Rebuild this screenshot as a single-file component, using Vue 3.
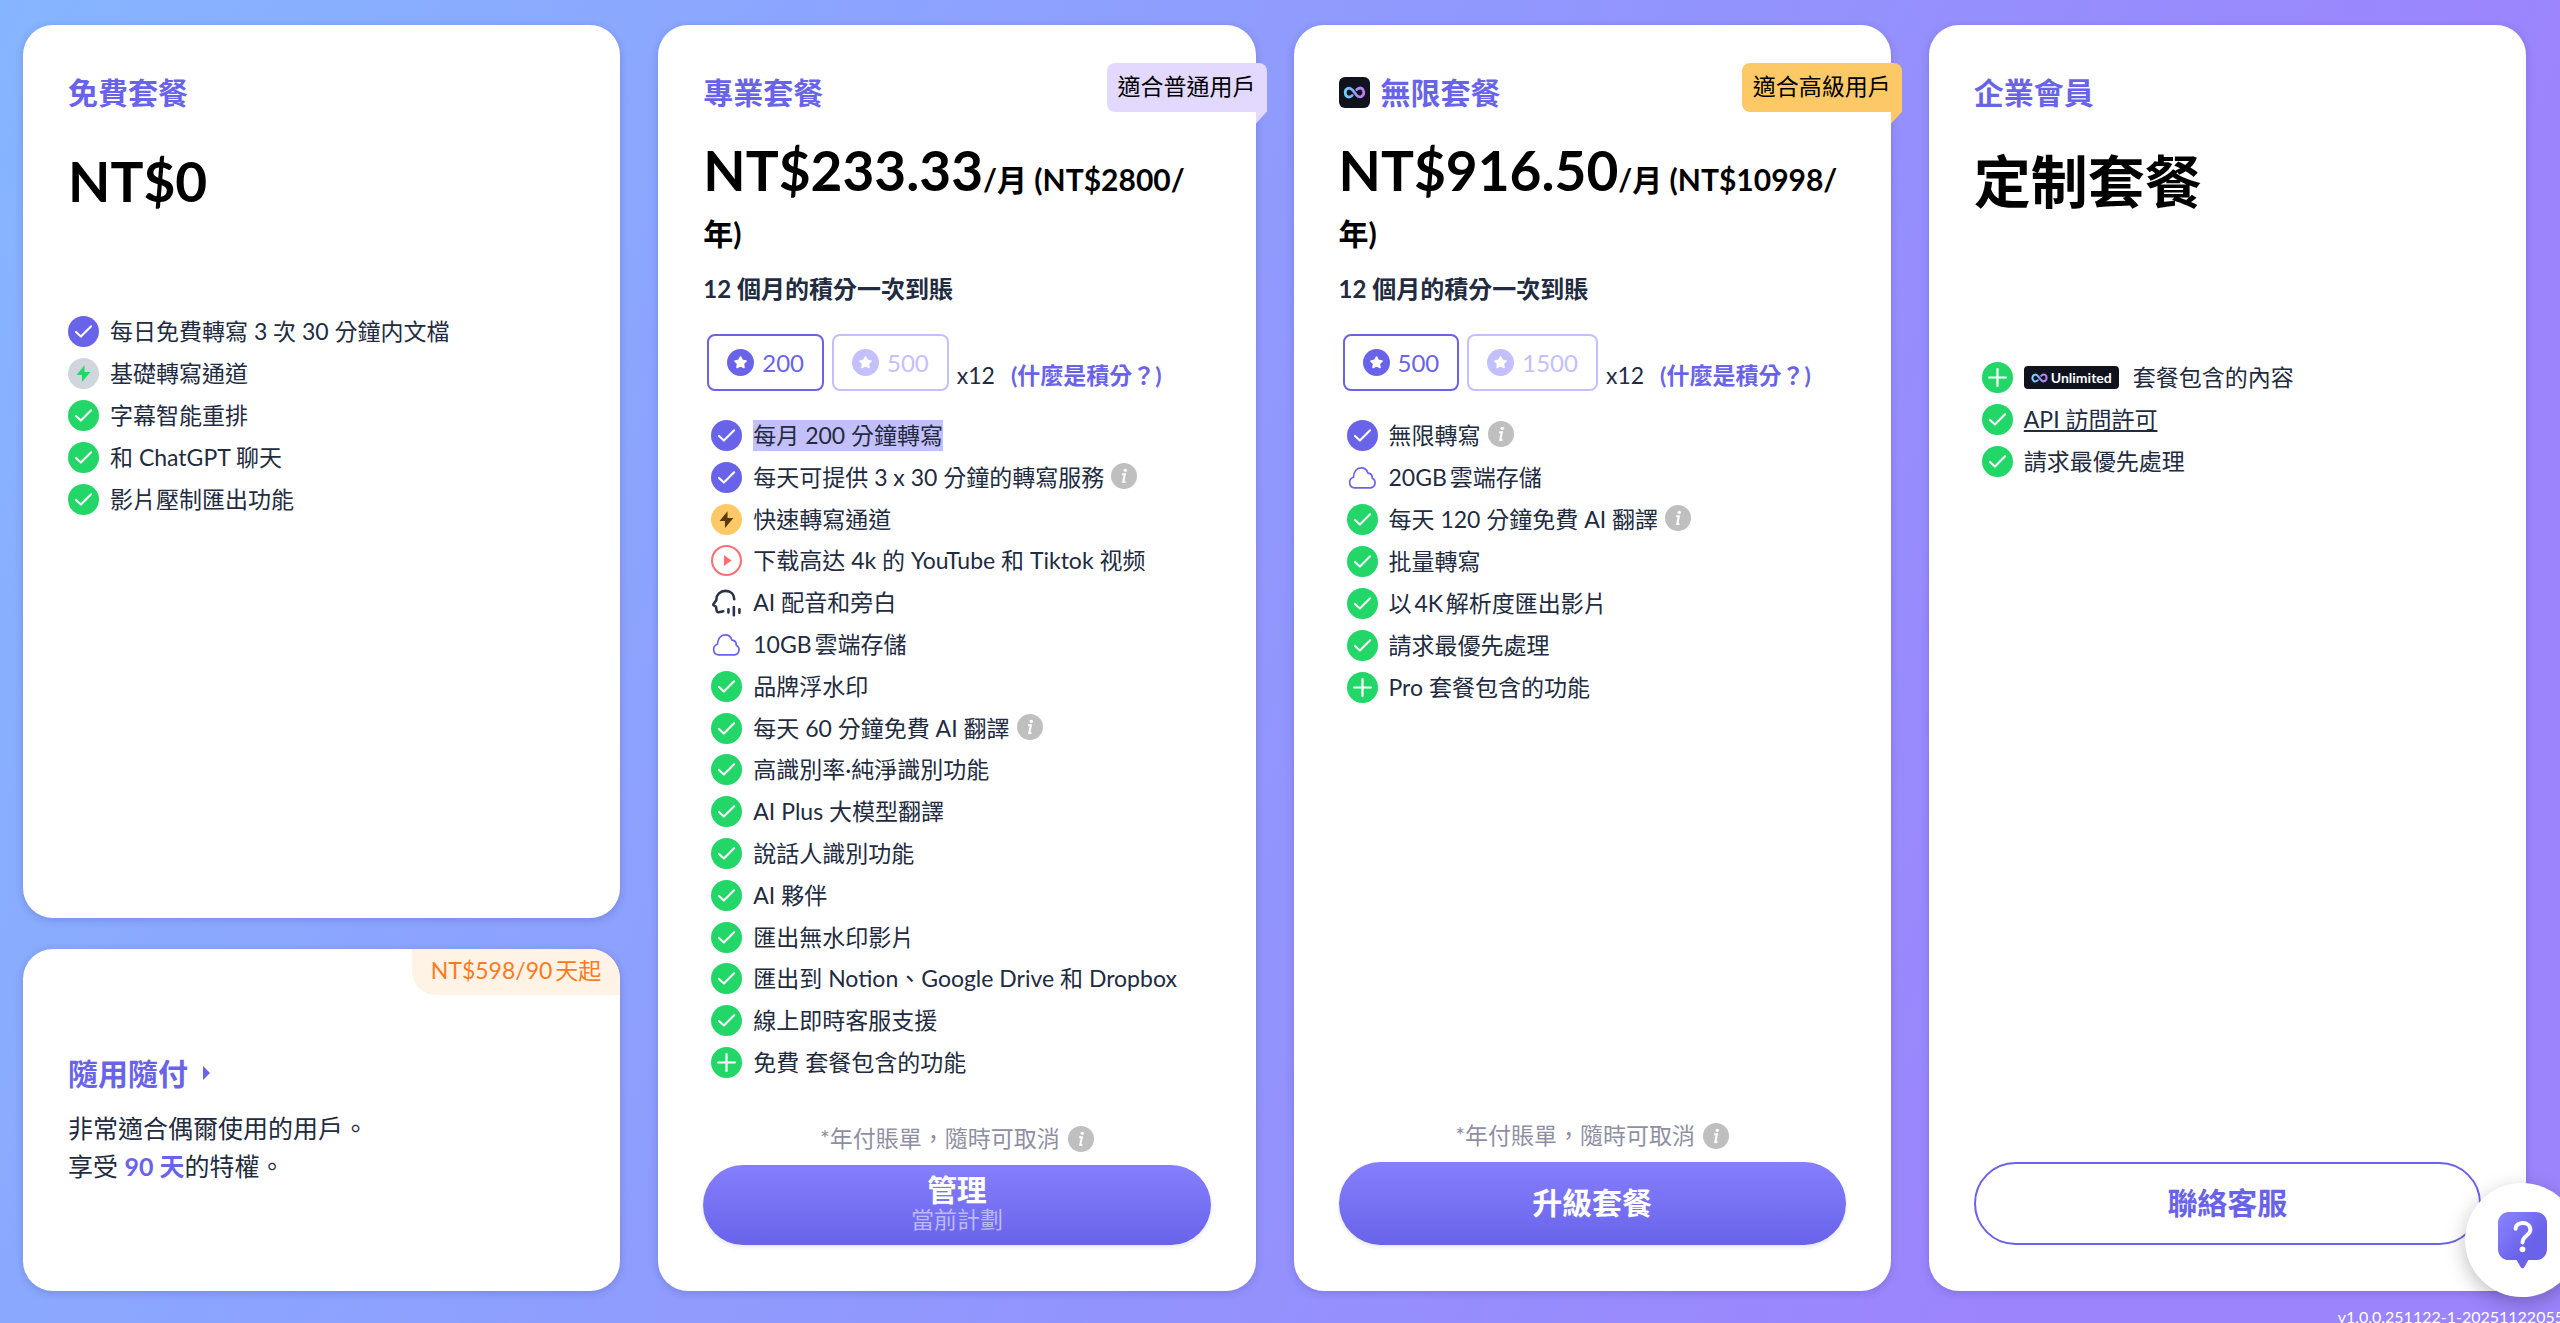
<template>
  <main class="pricing" lang="zh-Hant">
    <div class="column">
      <section class="card free">
        <h2 class="title">免費套餐</h2>
        <p class="price single"><strong>NT$0</strong></p>
        <ul class="features">
          <li v-for="item in freeFeatures" :key="item.text">
            <svg class="icon" viewBox="0 0 24 24"><use :href="'#i-' + item.icon" /></svg>
            <span>{{ item.text }}</span>
          </li>
        </ul>
      </section>
      <section class="card payg">
        <div class="corner">NT$598/90天起</div>
        <h2 class="title">
          <a href="#payg">隨用隨付</a>
          <svg class="arrow" viewBox="0 0 8 16"><path d="M0 0l8 8-8 8z" fill="currentColor" /></svg>
        </h2>
        <p class="desc">非常適合偶爾使用的用戶。<br />享受 <b>90 天</b>的特權。</p>
      </section>
    </div>

    <section v-for="plan in plans" :key="plan.key" class="card" :class="plan.key">
      <div class="ribbon">{{ plan.ribbon }}</div>
      <h2 class="title">
        <svg v-if="plan.key === 'unlimited'" class="badge" viewBox="0 0 31 31">
          <rect width="31" height="31" rx="6" fill="#10121e" />
          <use href="#i-infinity" x="4" y="9" width="23" height="13" />
        </svg>
        {{ plan.title }}
      </h2>
      <p class="price"><strong>{{ plan.price }}</strong>/月 ({{ plan.yearly }}/年)</p>
      <p class="once">12 個月的積分一次到賬</p>
      <div class="credits">
        <button
          v-for="num in plan.credits"
          :key="num"
          class="chip"
          :class="{ chipActive: picked[plan.key] === num }"
          @click="picked[plan.key] = num"
        >
          <svg viewBox="0 0 24 24"><use href="#i-star" /></svg>{{ num }}
        </button>
        <span class="times">x12</span>
        <a href="#credits">(什麼是積分？)</a>
      </div>
      <ul class="features">
        <li v-for="item in plan.features" :key="item.text">
          <svg class="icon" viewBox="0 0 24 24"><use :href="'#i-' + item.icon" /></svg>
          <span :class="{ marked: item.marked }">{{ item.text }}</span>
          <svg v-if="item.info" class="info" viewBox="0 0 24 24"><use href="#i-info" /></svg>
        </li>
      </ul>
      <p class="note">
        *年付賬單，隨時可取消
        <svg class="info" viewBox="0 0 24 24"><use href="#i-info" /></svg>
      </p>
      <button class="main">
        {{ plan.button }}
        <span v-if="plan.sub">{{ plan.sub }}</span>
      </button>
    </section>

    <section class="card enterprise">
      <h2 class="title">企業會員</h2>
      <p class="price single"><strong>定制套餐</strong></p>
      <ul class="features">
        <li>
          <svg class="icon" viewBox="0 0 24 24"><use href="#i-plus" /></svg>
          <span class="tag">
            <svg viewBox="0 0 24 14"><use href="#i-infinity" width="24" height="14" /></svg>Unlimited
          </span>
          <span>套餐包含的內容</span>
        </li>
        <li>
          <svg class="icon" viewBox="0 0 24 24"><use href="#i-check" /></svg>
          <a href="#api">API 訪問許可</a>
        </li>
        <li>
          <svg class="icon" viewBox="0 0 24 24"><use href="#i-check" /></svg>
          <span>請求最優先處理</span>
        </li>
      </ul>
      <button class="main outline">聯絡客服</button>
    </section>

    <button class="help" aria-label="help">
      <svg viewBox="0 0 50 58">
        <path d="M11 0h28a11 11 0 0 1 11 11v27a11 11 0 0 1-11 11h-8l-4 7q-2 3-4 0l-4-7h-8a11 11 0 0 1-11-11V11A11 11 0 0 1 11 0z" fill="url(#g-help)" />
        <path d="M18 17c0-8 15-8 15 1 0 6-8 6-8 13" fill="none" stroke="#fff" stroke-width="4" stroke-linecap="round" />
        <circle cx="25" cy="38" r="3" fill="#fff" />
      </svg>
    </button>
    <div class="version">v1.0.0.251122-1-20251122055</div>

    <!-- 圖示 -->
    <svg class="sprite" aria-hidden="true">
      <defs>
        <linearGradient id="g-inf" x1="0" x2="1" y1="0" y2="0">
          <stop offset="0" stop-color="#6fd3fb" />
          <stop offset="0.5" stop-color="#8f9df5" />
          <stop offset="1" stop-color="#c27bf2" />
        </linearGradient>
        <linearGradient id="g-help" x1="0" x2="1" y1="0" y2="1">
          <stop offset="0" stop-color="#8c85ff" />
          <stop offset="0.6" stop-color="#6a63ea" />
        </linearGradient>
        <symbol id="i-check" viewBox="0 0 24 24">
          <circle cx="12" cy="12" r="12" fill="#23d668" />
          <path d="M6.2 12.3l3.8 3.6 7.9-7.9" fill="none" stroke="#fff" stroke-width="1.6" stroke-linecap="round" stroke-linejoin="round" />
        </symbol>
        <symbol id="i-checkP" viewBox="0 0 24 24">
          <circle cx="12" cy="12" r="12" fill="#6963ea" />
          <path d="M6.2 12.3l3.8 3.6 7.9-7.9" fill="none" stroke="#fff" stroke-width="1.6" stroke-linecap="round" stroke-linejoin="round" />
        </symbol>
        <symbol id="i-plus" viewBox="0 0 24 24">
          <circle cx="12" cy="12" r="12" fill="#23d668" />
          <path d="M12 5.5v13M5.5 12h13" stroke="#fff" stroke-width="1.7" stroke-linecap="round" />
        </symbol>
        <symbol id="i-boltG" viewBox="0 0 24 24">
          <circle cx="12" cy="12" r="12" fill="#d1d5dc" />
          <path d="M12.8 5.6L6.6 13.2h4.2v5.4l6.6-7.8h-4.6z" fill="#23d668" />
        </symbol>
        <symbol id="i-boltY" viewBox="0 0 24 24">
          <circle cx="12" cy="12" r="12" fill="#fdc966" />
          <path d="M12.8 5.6L6.6 13.2h4.2v5.4l6.6-7.8h-4.6z" fill="#5a3a05" />
        </symbol>
        <symbol id="i-play" viewBox="0 0 24 24">
          <circle cx="12" cy="12" r="11.2" fill="none" stroke="#fb6f74" stroke-width="1.6" />
          <path d="M10 7.7v8.6l6-4.3z" fill="#fb6f74" />
        </symbol>
        <symbol id="i-voice" viewBox="0 0 24 24">
          <path d="M18 9.5C18 5.5 15.2 3 11.3 3 7 3 4.2 6 4.2 9.6c0 1.4-2.5 3-2.5 4.2 0 .9 1.9.7 2.2 1.5.3 1 0 2.9 1 3.9.9.9 2.6 0 4.6-.4M13.5 17.3v2.4M17.7 15.5v6.3M22 17.3v2.7" fill="none" stroke="#2a3244" stroke-width="2" stroke-linecap="round" stroke-linejoin="round" />
        </symbol>
        <symbol id="i-cloud" viewBox="0 0 24 24">
          <path d="M6 20a4.2 4.2 0 0 1-1-8.2C5.1 7.5 7.5 4.5 11 4.500c2.800 0 4.500 1.600 5.200 4.100 2.500.3 3.500 1.700 3.300 3.900A4 4 0 0 1 18.500 20z" fill="none" stroke="#6963ea" stroke-width="1.3" stroke-linejoin="round" />
        </symbol>
        <symbol id="i-star" viewBox="0 0 24 24">
          <circle cx="12" cy="12" r="12" fill="currentColor" />
          <path d="M12 7.2l1.5 3 3.3.5-2.4 2.3.6 3.3-3-1.6-3 1.6.6-3.3-2.4-2.3 3.3-.5z" fill="#fff" stroke="#fff" stroke-width="1.6" stroke-linejoin="round" />
        </symbol>
        <symbol id="i-info" viewBox="0 0 24 24">
          <circle cx="12" cy="12" r="12" fill="#bfbfbf" />
          <path d="M10.3 10.3h2.5l-1.5 7.2h2" fill="none" stroke="#fff" stroke-width="1.9" />
          <circle cx="13.2" cy="6.8" r="1.6" fill="#fff" />
        </symbol>
        <symbol id="i-infinity" viewBox="0 0 24 14">
          <path d="M9.5 10.2C5 14 2 10.5 2 7s4-7 8-2.5l4 5c4 4.500 8 1 8-2.500s-3-7-7.500-3.200" fill="none" stroke="url(#g-inf)" stroke-width="3" stroke-linecap="round" />
        </symbol>
      </defs>
    </svg>
  </main>
</template>

<script setup>
import { reactive } from 'vue';

// 每個方案目前選擇的積分
const picked = reactive({ pro: 200, unlimited: 500 });

const freeFeatures = [
  { icon: 'checkP', text: '每日免費轉寫 3 次 30 分鐘内文檔' },
  { icon: 'boltG', text: '基礎轉寫通道' },
  { icon: 'check', text: '字幕智能重排' },
  { icon: 'check', text: '和 ChatGPT 聊天' },
  { icon: 'check', text: '影片壓制匯出功能' },
];

const plans = [
  {
    key: 'pro',
    title: '專業套餐',
    ribbon: '適合普通用戶',
    price: 'NT$233.33',
    yearly: 'NT$2800',
    credits: [200, 500],
    button: '管理',
    sub: '當前計劃',
    features: [
      { icon: 'checkP', text: '每月 200 分鐘轉寫', marked: true },
      { icon: 'checkP', text: '每天可提供 3 x 30 分鐘的轉寫服務', info: true },
      { icon: 'boltY', text: '快速轉寫通道' },
      { icon: 'play', text: '下载高达 4k 的 YouTube 和 Tiktok 视频' },
      { icon: 'voice', text: 'AI 配音和旁白' },
      { icon: 'cloud', text: '10GB雲端存儲' },
      { icon: 'check', text: '品牌浮水印' },
      { icon: 'check', text: '每天 60 分鐘免費 AI 翻譯', info: true },
      { icon: 'check', text: '高識別率·純淨識別功能' },
      { icon: 'check', text: 'AI Plus 大模型翻譯' },
      { icon: 'check', text: '說話人識別功能' },
      { icon: 'check', text: 'AI 夥伴' },
      { icon: 'check', text: '匯出無水印影片' },
      { icon: 'check', text: '匯出到 Notion、Google Drive 和 Dropbox' },
      { icon: 'check', text: '線上即時客服支援' },
      { icon: 'plus', text: '免費 套餐包含的功能' },
    ],
  },
  {
    key: 'unlimited',
    title: '無限套餐',
    ribbon: '適合高級用戶',
    price: 'NT$916.50',
    yearly: 'NT$10998',
    credits: [500, 1500],
    button: '升級套餐',
    features: [
      { icon: 'checkP', text: '無限轉寫', info: true },
      { icon: 'cloud', text: '20GB雲端存儲' },
      { icon: 'check', text: '每天 120 分鐘免費 AI 翻譯', info: true },
      { icon: 'check', text: '批量轉寫' },
      { icon: 'check', text: '以4K解析度匯出影片' },
      { icon: 'check', text: '請求最優先處理' },
      { icon: 'plus', text: 'Pro 套餐包含的功能' },
    ],
  },
];
</script>

<style>
body {
  margin: 0;
  overflow: hidden;
}
</style>

<style scoped>
.pricing {
  position: relative;
  display: grid;
  grid-template-columns: repeat(4, minmax(0, 1fr));
  gap: 38px;
  box-sizing: border-box;
  min-height: 100vh;
  padding: 25px 34px 32px 23px;
  background: linear-gradient(115deg, #86b5ff, #9196fd 50%, #9c84fd 82%);
  font-family: Lato, 'Noto Sans CJK TC', sans-serif;
  font-size: 23px;
  line-height: 31px;
  text-autospace: normal;
  color: #222b40;
}
.column {
  display: flex;
  flex-direction: column;
  gap: 31px;
}
.card {
  position: relative;
  display: flex;
  flex-direction: column;
  box-sizing: border-box;
  padding: 45px 45px 46px;
  border-radius: 30px;
  background: #fff;
  box-shadow: 0 2px 8px rgba(40, 30, 110, 0.2);
}
.free {
  flex: 1;
}
.payg {
  justify-content: center;
  height: 342px;
  padding-bottom: 49px;
  overflow: hidden;
}
.title {
  display: flex;
  align-items: center;
  gap: 11px;
  margin: 0;
  font-size: 30px;
  line-height: 44px;
  font-weight: 700;
  color: #6963ea;
}
.title a {
  color: inherit;
  text-decoration: none;
}
.badge {
  width: 31px;
  height: 31px;
}
.price {
  margin: 29px 0 0;
  font-size: 30px;
  line-height: 54px;
  font-weight: 700;
  color: #000;
}
.price strong {
  font-size: 55px;
  font-weight: 700;
}
.single {
  margin-top: 40px;
}
.enterprise .price strong {
  font-size: 57px;
}
.once {
  margin: 11px 0 0;
  font-size: 24px;
  line-height: 36px;
  font-weight: 700;
}
.credits {
  display: flex;
  align-items: flex-end;
  gap: 8px;
  margin: 27px 0 0 4px;
}
.credits a {
  margin-left: 8px;
  color: #6963ea;
  font-weight: 700;
  text-decoration: none;
}
.chip {
  display: flex;
  align-items: center;
  gap: 8px;
  height: 57px;
  padding: 0 18px;
  border: 2px solid #c3c0fd;
  border-radius: 8px;
  background: #fff;
  color: #c3c0fd;
  font: inherit;
  font-size: 24px;
}
.chip svg {
  width: 27px;
  height: 27px;
}
.chipActive {
  border-color: #6963ea;
  color: #6963ea;
}
.features {
  display: flex;
  flex-direction: column;
  gap: 11px;
  margin: 29px 0 0;
  padding: 0 0 0 8px;
  list-style: none;
}
.features li {
  display: flex;
  align-items: center;
  gap: 11px;
  height: 31px;
  white-space: nowrap;
}
.features a {
  color: inherit;
}
.free .features {
  margin-top: 99px;
  padding-left: 0;
}
.enterprise .features {
  margin-top: 144px;
}
.pro .features {
  flex: 1;
  gap: 0;
  justify-content: space-between;
  margin-bottom: 45px;
}
.icon {
  flex: none;
  width: 31px;
  height: 31px;
}
.info {
  flex: none;
  width: 26px;
  height: 26px;
}
.features .info {
  margin: 0 0 3px -4px;
}
.marked {
  background: #c3bffa;
}
.tag {
  display: flex;
  align-items: center;
  gap: 3px;
  height: 23px;
  margin-right: 3px;
  padding: 0 7px;
  border-radius: 4px;
  background: #10121e;
  color: #fff;
  font-size: 14px;
  font-weight: 700;
}
.tag svg {
  width: 17px;
  height: 10px;
}
.note {
  display: flex;
  align-items: center;
  justify-content: center;
  gap: 8px;
  margin: auto 0 11px;
  color: #8f8fa3;
}
.main {
  display: flex;
  flex-direction: column;
  align-items: center;
  justify-content: center;
  height: 83px;
  padding: 0 0 3px;
  border: 0;
  border-radius: 42px;
  background: linear-gradient(#857ffd, #6963ea);
  box-shadow: 0 2px 4px rgba(40, 30, 110, 0.12);
  color: #fff;
  font: inherit;
  font-size: 30px;
  font-weight: 700;
}
.main span {
  font-size: 23px;
  line-height: 28px;
  font-weight: 400;
  color: #bcb9fb;
}
.pro .main {
  height: 80px;
}
.outline {
  margin-top: auto;
  border: 2px solid #6963ea;
  background: #fff;
  box-shadow: none;
  color: #6963ea;
}
.ribbon {
  position: absolute;
  top: 38px;
  right: -11px;
  padding: 8px 11px 10px;
  border-radius: 8px 8px 0 8px;
  background: #e3d9ff;
  color: #000;
}
.ribbon::after {
  content: '';
  position: absolute;
  top: 100%;
  right: 0;
  width: 11px;
  height: 12px;
  background: inherit;
  clip-path: polygon(0 0, 100% 0, 0 100%);
}
.unlimited .ribbon {
  background: #fdc966;
}
.corner {
  position: absolute;
  top: 0;
  right: 0;
  padding: 6px 19px 9px;
  border-radius: 0 0 0 24px;
  background: #fff3e6;
  color: #ff7a1c;
}
.arrow {
  width: 7px;
  height: 16px;
  margin-left: 4px;
}
.desc {
  margin: 14px 0 0;
  font-size: 25px;
  line-height: 38px;
}
.desc b {
  color: #6963ea;
}
.help {
  position: absolute;
  right: -19px;
  bottom: 26px;
  display: flex;
  align-items: center;
  justify-content: center;
  width: 114px;
  height: 114px;
  padding: 0;
  border: 0;
  border-radius: 50%;
  background: #fff;
  box-shadow: 0 6px 20px rgba(0, 0, 0, 0.25);
}
.help svg {
  width: 49px;
  height: 57px;
}
.version {
  position: absolute;
  right: -4px;
  bottom: -8px;
  color: #fff;
  font-size: 16px;
  line-height: 28px;
}
.sprite {
  position: absolute;
  width: 0;
  height: 0;
}
</style>
